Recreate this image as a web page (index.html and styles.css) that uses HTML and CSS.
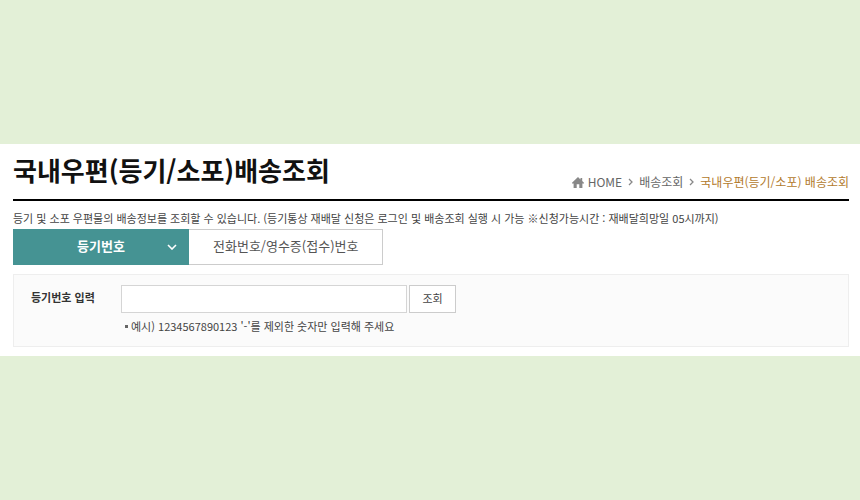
FILE: index.html
```
<!DOCTYPE html>
<html lang="ko">
<head>
    <meta charset="UTF-8">
    <meta name="viewport" content="width=device-width, initial-scale=1.0">
    <title>국내우편(등기/소포)배송조회</title>
    <link rel="stylesheet" href="styles.css">
</head>
<body>
    <main class="content">
        <header class="page-header">
            <h1>국내우편(등기/소포)배송조회</h1>
            <nav class="breadcrumb">
                <a href="#" class="home">
                    <svg class="home-icon" viewBox="0 0 12 11" aria-hidden="true">
                        <path d="M6 0 L8.5 2.4 V1 H10.2 V4 L12 5.8 V6.4 H10.4 V11 H7.3 V7.2 H4.7 V11 H1.6 V6.4 H0 V5.8 Z"/>
                    </svg>
                    HOME
                </a>
                <svg class="arrow" viewBox="0 0 5 8" aria-hidden="true"><path d="M1 1 L4 4 L1 7"/></svg>
                <a href="#">배송조회</a>
                <svg class="arrow" viewBox="0 0 5 8" aria-hidden="true"><path d="M1 1 L4 4 L1 7"/></svg>
                <a href="#" class="current">국내우편(등기/소포) 배송조회</a>
            </nav>
        </header>

        <p class="description">등기 및 소포 우편물의 배송정보를 조회할 수 있습니다. (등기통상 재배달 신청은 로그인 및 배송조회 실행 시 가능 ※신청가능시간 : 재배달희망일 05시까지)</p>

        <div class="tabs">
            <button type="button" class="tab active">
                등기번호
                <svg class="tab-icon" viewBox="0 0 10 6" aria-hidden="true"><path d="M1 1 L5 5 L9 1"/></svg>
            </button>
            <button type="button" class="tab">전화번호/영수증(접수)번호</button>
        </div>

        <!-- Search Form -->
        <form class="search-box">
            <label for="regiNo">등기번호 입력</label>
            <div class="search-field">
                <div class="search-row">
                    <input type="text" id="regiNo" name="regiNo">
                    <button type="submit" class="search-button">조회</button>
                </div>
                <p class="hint">예시) 1234567890123 '-'를 제외한 숫자만 입력해 주세요</p>
            </div>
        </form>
    </main>
</body>
</html>
```

FILE: styles.css
```
/* Base Styles */
* {
    margin: 0;
    padding: 0;
    box-sizing: border-box;
}

body {
    display: flex;
    flex-direction: column;
    justify-content: center;
    min-height: 100vh;
    background-color: #e3f0d7;
    color: #444;
    font-family: "Noto Sans CJK KR", sans-serif;
    font-size: 11px;
    line-height: 18px;
}

a {
    color: inherit;
    text-decoration: none;
}

button,
input {
    font: inherit;
    color: inherit;
}

button {
    cursor: pointer;
}

.content {
    background-color: #fff;
    padding: 6px 11px 9px 13px;
}

/* Page Header */
.page-header {
    display: flex;
    justify-content: space-between;
    align-items: flex-end;
    padding-bottom: 8px;
    border-bottom: 2px solid #000;
}

h1 {
    margin-bottom: 2px;
    font-size: 26px;
    line-height: 39px;
    font-weight: 700;
    color: #111;
}

.breadcrumb {
    display: flex;
    align-items: center;
    gap: 6px;
    font-size: 12px;
    color: #666;
}

.home {
    display: flex;
    align-items: center;
    gap: 4px;
}

.home-icon {
    width: 12px;
    height: 11px;
    fill: #888;
}

.arrow {
    width: 5px;
    height: 8px;
    fill: none;
    stroke: #888;
    stroke-width: 1.3;
}

.current {
    color: #b27a2c;
}

.description {
    margin-top: 8px;
    margin-bottom: 2px;
}

/* Tabs */
.tabs {
    display: flex;
}

.tab {
    height: 36px;
    padding: 0 24px 2px;
    border: 1px solid #ccc;
    border-left: none;
    background-color: #fff;
    font-size: 13px;
    color: #555;
}

.tab.active {
    position: relative;
    width: 176px;
    border: none;
    background-color: #459393;
    color: #fff;
    font-weight: 700;
}

.tab-icon {
    position: absolute;
    right: 12px;
    top: 15px;
    width: 10px;
    height: 6px;
    fill: none;
    stroke: #fff;
    stroke-width: 1.6;
}

/* Search Form */
.search-box {
    display: flex;
    align-items: flex-start;
    margin-top: 9px;
    padding: 10px 17px 11px;
    border: 1px solid #eee;
    background-color: #fbfbfb;
}

.search-box label {
    width: 90px;
    padding-top: 3px;
    font-weight: 700;
    color: #333;
}

.search-row {
    display: flex;
    gap: 2px;
}

.search-row input {
    width: 286px;
    height: 28px;
    padding: 0 8px;
    border: 1px solid #d5d5d5;
    background-color: #fff;
}

.search-button {
    width: 47px;
    height: 28px;
    padding-bottom: 2px;
    border: 1px solid #ccc;
    background-color: #fff;
}

.hint {
    display: flex;
    align-items: center;
    gap: 3px;
    margin-top: 4px;
    padding-left: 4px;
}

.hint::before {
    content: "";
    width: 3px;
    height: 3px;
    background-color: #666;
}
```
